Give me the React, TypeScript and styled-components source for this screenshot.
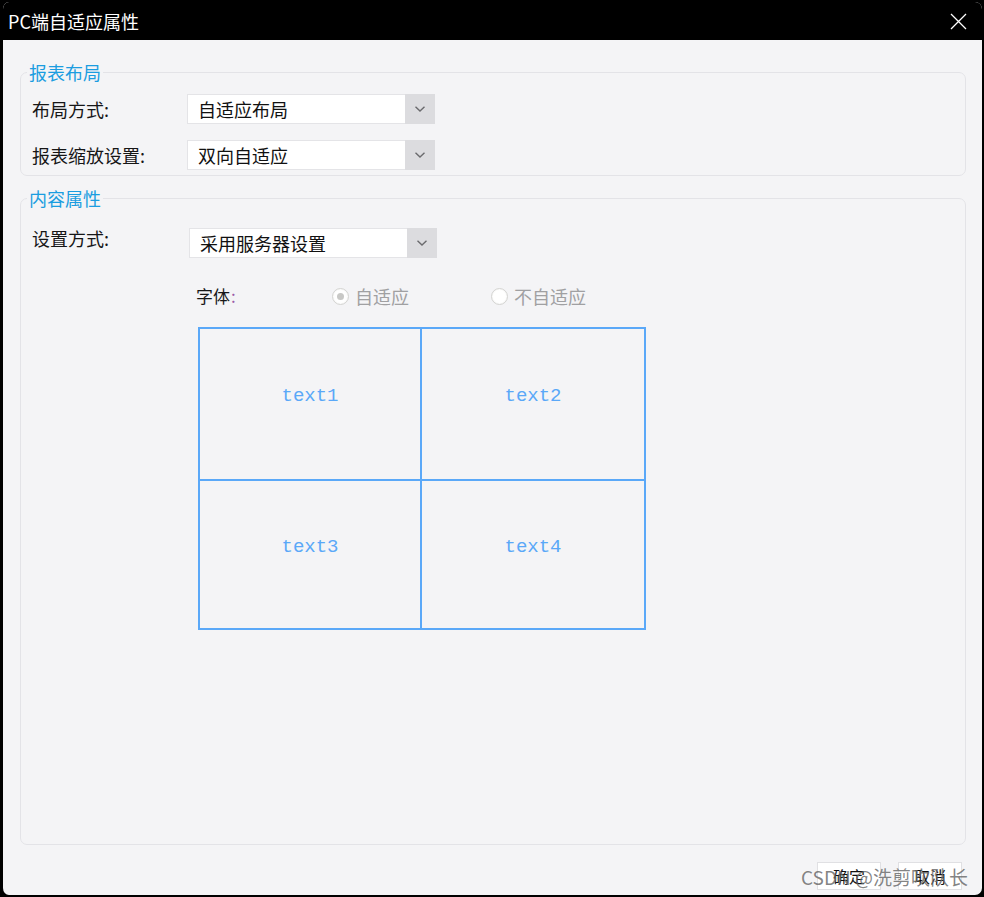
import React from 'react';
import styled, { createGlobalStyle } from 'styled-components';

const GlobalStyle = createGlobalStyle`
    html, body {
        margin: 0;
        padding: 0;
        background: #000000;
    }
    body {
        font-family: 'Noto Sans CJK SC', 'Noto Sans', sans-serif;
    }
`;

const layoutRows = [
    { label: '布局方式:', value: '自适应布局' },
    { label: '报表缩放设置:', value: '双向自适应' },
];

const cells = ['text1', 'text2', 'text3', 'text4'];

const Chevron = () => (
    <svg width="12" height="8" viewBox="0 0 12 8">
        <path d="M1.5 1.8 L6 6 L10.5 1.8" fill="none" stroke="#6b6b6e" strokeWidth="1.4" />
    </svg>
);

const CloseIcon = () => (
    <svg width="17" height="17" viewBox="0 0 17 17">
        <path d="M1 1 L16 16 M16 1 L1 16" stroke="#ffffff" strokeWidth="1.3" />
    </svg>
);

const Select = ({ value }: { value: string }) => (
    <SelectBox>
        <SelectValue>{value}</SelectValue>
        <SelectButton>
            <Chevron />
        </SelectButton>
    </SelectBox>
);

const App = () => {
    return (
        <>
            <GlobalStyle />
            <Window>
                <TitleBar>
                    <Title>PC端自适应属性</Title>
                    <CloseButton>
                        <CloseIcon />
                    </CloseButton>
                </TitleBar>
                <Body>
                    <Group>
                        <Legend>报表布局</Legend>
                        <GroupContent $top={12} $bottom={5}>
                            {layoutRows.map((row) => (
                                <Row key={row.label}>
                                    <Label $width={155}>{row.label}</Label>
                                    <Select value={row.value} />
                                </Row>
                            ))}
                        </GroupContent>
                    </Group>
                    <Group $grow>
                        <Legend>内容属性</Legend>
                        <GroupContent $top={20} $bottom={0}>
                            <Row $top>
                                <Label $width={157}>设置方式:</Label>
                                <Select value="采用服务器设置" />
                            </Row>
                            <FontRow>
                                <FontLabel>
                                    字体<Colon>:</Colon>
                                </FontLabel>
                                <RadioOption $width={159}>
                                    <RadioCircle $checked />
                                    自适应
                                </RadioOption>
                                <RadioOption>
                                    <RadioCircle />
                                    不自适应
                                </RadioOption>
                            </FontRow>
                            <PreviewGrid>
                                {cells.map((text) => (
                                    <PreviewCell key={text}>{text}</PreviewCell>
                                ))}
                            </PreviewGrid>
                        </GroupContent>
                    </Group>
                    <Footer>
                        <DialogButton>确定</DialogButton>
                        <DialogButton>取消</DialogButton>
                    </Footer>
                </Body>
                <Watermark>CSDN @洗剪吹队长</Watermark>
            </Window>
        </>
    );
};

const Window = styled.div`
    position: relative;
    box-sizing: border-box;
    width: 984px;
    height: 897px;
    display: flex;
    flex-direction: column;
    background: #f4f4f6;
    border: 2px solid #000000;
    border-left-width: 3px;
    border-radius: 9px;
    overflow: hidden;
`;
const TitleBar = styled.div`
    height: 38px;
    flex-shrink: 0;
    display: flex;
    align-items: center;
    justify-content: space-between;
    padding: 0 15px 0 5px;
    background: #000000;
`;
const Title = styled.div`
    color: #ffffff;
    font-size: 18px;
    line-height: 22px;
    margin-top: -1px;
`;
const CloseButton = styled.div`
    display: flex;
    align-items: center;
    margin-top: 1px;
`;
const Body = styled.div`
    flex: 1;
    display: flex;
    flex-direction: column;
    padding: 22px 16px 0 17px;
    min-height: 0;
`;
const Group = styled.fieldset<{ $grow?: boolean }>`
    margin: 0;
    padding: 0;
    border: 1px solid #e3e3e7;
    border-radius: 7px;
    min-width: 0;
    ${(p) => (p.$grow ? 'flex: 1; margin-top: 12px;' : '')}
`;
const Legend = styled.legend`
    margin-left: 6px;
    padding: 0 2px;
    color: #1b9de0;
    font-size: 18px;
    line-height: 20px;
`;
const GroupContent = styled.div<{ $top: number; $bottom: number }>`
    display: flex;
    flex-direction: column;
    gap: 16px;
    padding: ${(p) => p.$top}px 0 ${(p) => p.$bottom}px 11px;
`;
const Row = styled.div<{ $top?: boolean }>`
    display: flex;
    align-items: ${(p) => (p.$top ? 'flex-start' : 'center')};
`;
const Label = styled.div<{ $width: number }>`
    width: ${(p) => p.$width}px;
    flex-shrink: 0;
    color: #161616;
    font-size: 18px;
    line-height: 20px;
`;
const SelectBox = styled.div`
    display: flex;
    width: 248px;
    height: 30px;
    box-sizing: border-box;
`;
const SelectValue = styled.div`
    flex: 1;
    display: flex;
    align-items: center;
    padding-left: 10px;
    background: #ffffff;
    border: 1px solid #e4e4e7;
    border-right: none;
    color: #111111;
    font-size: 18px;
`;
const SelectButton = styled.div`
    width: 30px;
    display: flex;
    align-items: center;
    justify-content: center;
    background: #dcdcdf;
`;
const FontRow = styled.div`
    display: flex;
    align-items: center;
    margin: 12px 0 0 164px;
    height: 20px;
`;
const FontLabel = styled.div`
    width: 136px;
    color: #161616;
    font-size: 17px;
    line-height: 20px;
`;
const Colon = styled.span`
    color: #9a5aa8;
    margin-left: 1px;
`;
const RadioOption = styled.div<{ $width?: number }>`
    ${(p) => (p.$width ? `width: ${p.$width}px;` : '')}
    display: flex;
    align-items: center;
    gap: 6px;
    color: #a0a0a2;
    font-size: 18px;
    line-height: 20px;
`;
const RadioCircle = styled.span<{ $checked?: boolean }>`
    position: relative;
    width: 17px;
    height: 17px;
    box-sizing: border-box;
    border-radius: 50%;
    border: 1px solid #d4d4d2;
    background: radial-gradient(circle, #ffffff 55%, #ececea 100%);
    &::after {
        content: '';
        display: ${(p) => (p.$checked ? 'block' : 'none')};
        position: absolute;
        left: 4px;
        top: 4px;
        width: 7px;
        height: 7px;
        border-radius: 50%;
        background: #c8c8c6;
    }
`;
const PreviewGrid = styled.div`
    margin: 5px 0 0 166px;
    width: 448px;
    height: 303px;
    box-sizing: border-box;
    display: grid;
    grid-template-columns: 1fr 1fr;
    grid-template-rows: 152px 1fr;
    border: 2px solid #5aa8f8;
`;
const PreviewCell = styled.div`
    display: flex;
    align-items: center;
    justify-content: center;
    padding-bottom: 16px;
    color: #5aa8f8;
    font-family: 'Liberation Mono', monospace;
    font-size: 19px;
    &:nth-child(odd) {
        border-right: 2px solid #5aa8f8;
    }
    &:nth-child(-n + 2) {
        border-bottom: 2px solid #5aa8f8;
    }
`;
const Footer = styled.div`
    display: flex;
    justify-content: flex-end;
    gap: 17px;
    padding: 17px 4px 5px 0;
`;
const DialogButton = styled.div`
    width: 64px;
    height: 28px;
    box-sizing: border-box;
    display: flex;
    align-items: center;
    justify-content: center;
    background: #ffffff;
    border: 1px solid #e0e0e3;
    color: #111111;
    font-size: 16px;
`;
const Watermark = styled.div`
    position: absolute;
    right: 14px;
    bottom: 6px;
    color: rgba(110, 110, 110, 0.85);
    font-size: 19px;
    line-height: 24px;
    pointer-events: none;
`;

export default App;
